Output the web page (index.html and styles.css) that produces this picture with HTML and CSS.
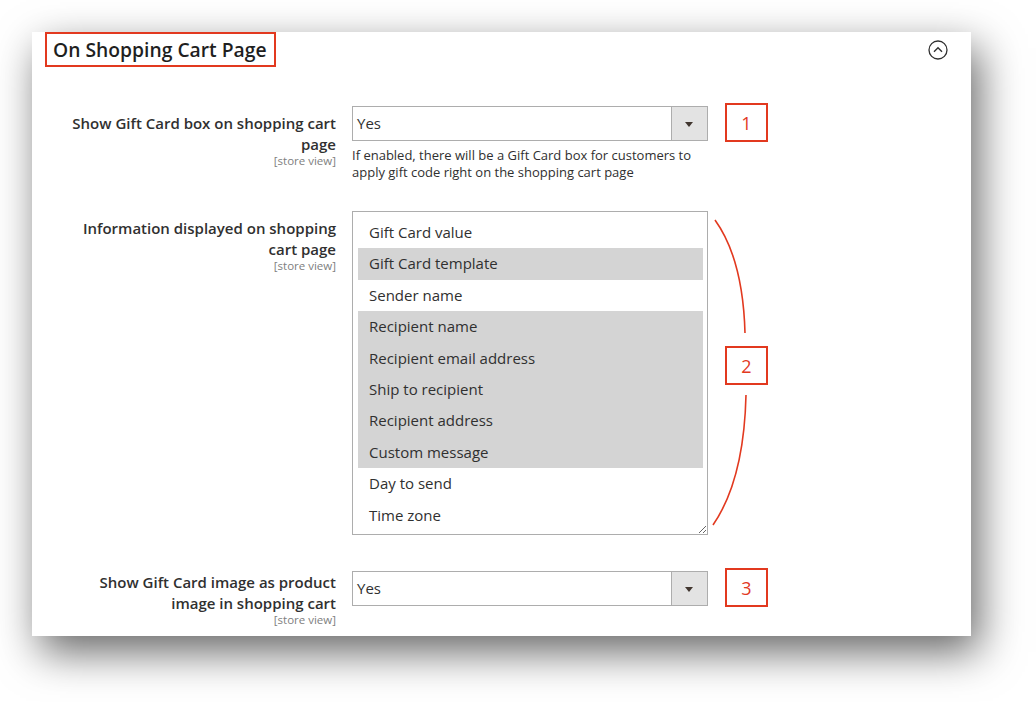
FILE: index.html
```html
<!DOCTYPE html>
<html lang="en">
<head>
<meta charset="utf-8">
<title>On Shopping Cart Page</title>
<link rel="stylesheet" href="styles.css">
</head>
<body>
<div class="panel">
  <div class="panel-head">
    <h2 class="title">On Shopping Cart Page</h2>
    <svg class="collapse" width="20" height="20" viewBox="0 0 20 20" aria-hidden="true">
      <circle cx="10" cy="10" r="9" fill="none" stroke="#303030" stroke-width="1.3"/>
      <polyline points="6,11.8 10,7.8 14,11.8" fill="none" stroke="#303030" stroke-width="1.4"/>
    </svg>
  </div>

  <div class="fields">
    <div class="row row-1">
      <div class="label">
        <span class="label-text">Show Gift Card box on shopping cart page</span>
        <span class="scope">[store view]</span>
      </div>
      <div class="control">
        <div class="select"><span class="select-value">Yes</span><span class="select-arrow"></span></div>
        <p class="note">If enabled, there will be a Gift Card box for customers to apply gift code right on the shopping cart page</p>
      </div>
      <div class="mark"><span class="badge">1</span></div>
    </div>

    <div class="row row-2">
      <div class="label">
        <span class="label-text">Information displayed on shopping cart page</span>
        <span class="scope">[store view]</span>
      </div>
      <div class="control">
        <div class="multiselect">
          <div class="option">Gift Card value</div>
          <div class="option selected">Gift Card template</div>
          <div class="option">Sender name</div>
          <div class="option selected">Recipient name</div>
          <div class="option selected">Recipient email address</div>
          <div class="option selected">Ship to recipient</div>
          <div class="option selected">Recipient address</div>
          <div class="option selected">Custom message</div>
          <div class="option">Day to send</div>
          <div class="option">Time zone</div>
        </div>
      </div>
      <div class="mark mark-bracket">
        <svg class="arc arc-top" width="62" height="135" viewBox="0 0 62 135" aria-hidden="true">
          <path d="M7 9 Q35 48 37 122" fill="none" stroke="#e2391f" stroke-width="1.6"/>
        </svg>
        <span class="badge">2</span>
        <svg class="arc arc-bottom" width="62" height="150" viewBox="0 0 62 150" aria-hidden="true">
          <path d="M38 10 Q36 95 5 140" fill="none" stroke="#e2391f" stroke-width="1.6"/>
        </svg>
      </div>
    </div>

    <div class="row row-3">
      <div class="label label-tight">
        <span class="label-text">Show Gift Card image as product image in shopping cart</span>
        <span class="scope">[store view]</span>
      </div>
      <div class="control">
        <div class="select"><span class="select-value">Yes</span><span class="select-arrow"></span></div>
      </div>
      <div class="mark"><span class="badge">3</span></div>
    </div>
  </div>
</div>
</body>
</html>
```

FILE: styles.css
```css
* {
  box-sizing: border-box;
}

html, body {
  margin: 0;
  padding: 0;
  background: #ffffff;
}

body {
  width: 1036px;
  height: 702px;
  overflow: hidden;
  font-family: "Open Sans", "Noto Sans", "Liberation Sans", sans-serif;
  color: #303030;
}

.panel {
  margin: 32px 0 0 32px;
  width: 939px;
  height: 604px;
  background: #ffffff;
  box-shadow: 8px 16px 40px rgba(0, 0, 0, 0.6);
}

.panel-head {
  display: flex;
  justify-content: space-between;
  align-items: flex-start;
  padding: 0 23px 0 13px;
}

.title {
  margin: 0;
  height: 35px;
  padding: 0 7px 0 6px;
  border: 2px solid #e2391f;
  font-size: 19.3px;
  font-weight: 600;
  line-height: 31px;
  color: #1f1f1f;
}

.collapse {
  display: block;
  margin-top: 8px;
}

.fields {
  margin-top: 39px;
  padding-left: 24px;
}

.row {
  display: grid;
  grid-template-columns: 296px 356px 62px;
  align-items: start;
}

.row-2 {
  margin-top: 30px;
}

.row-3 {
  margin-top: 36px;
}

.label {
  margin-right: 16px;
  padding-top: 7px;
  padding-left: 4px;
  text-align: right;
}

.label-tight {
  padding-top: 1px;
}

.label-text {
  display: block;
  font-size: 15px;
  font-weight: 600;
  line-height: 21px;
  color: #303030;
}

.scope {
  display: block;
  font-size: 11.5px;
  line-height: 12px;
  color: #808080;
}

.select {
  display: flex;
  align-items: center;
  height: 35px;
  border: 1px solid #adadad;
  background: #ffffff;
}

.select-value {
  flex: 1;
  padding-left: 4px;
  font-size: 15px;
  line-height: 33px;
  color: #303030;
}

.select-arrow {
  position: relative;
  width: 36px;
  height: 33px;
  border-left: 1px solid #adadad;
  background: #e3e3e3;
}

.select-arrow::after {
  content: "";
  position: absolute;
  left: 13px;
  top: 15px;
  border-left: 4px solid transparent;
  border-right: 4px solid transparent;
  border-top: 5px solid #41362f;
}

.note {
  margin: 6px 0 0;
  font-size: 13px;
  line-height: 17px;
  color: #303030;
}

.multiselect {
  height: 324px;
  padding: 5px 4px 0 5px;
  border: 1px solid #adadad;
  background: #ffffff;
  overflow: auto;
  resize: vertical;
}

.option {
  height: 31.4px;
  padding-left: 11px;
  font-size: 15px;
  line-height: 31.4px;
  color: #303030;
  white-space: nowrap;
}

.option.selected {
  background: #d4d4d4;
}

.mark {
  display: flex;
  flex-direction: column;
  align-items: flex-start;
  margin-top: -3px;
}

.mark-bracket {
  margin-top: 0;
}

.badge {
  display: flex;
  align-items: center;
  justify-content: center;
  width: 43px;
  height: 39px;
  margin-left: 17px;
  border: 2px solid #e2391f;
  font-size: 18px;
  line-height: 1;
  color: #e2391f;
}

.arc {
  display: block;
}
```
